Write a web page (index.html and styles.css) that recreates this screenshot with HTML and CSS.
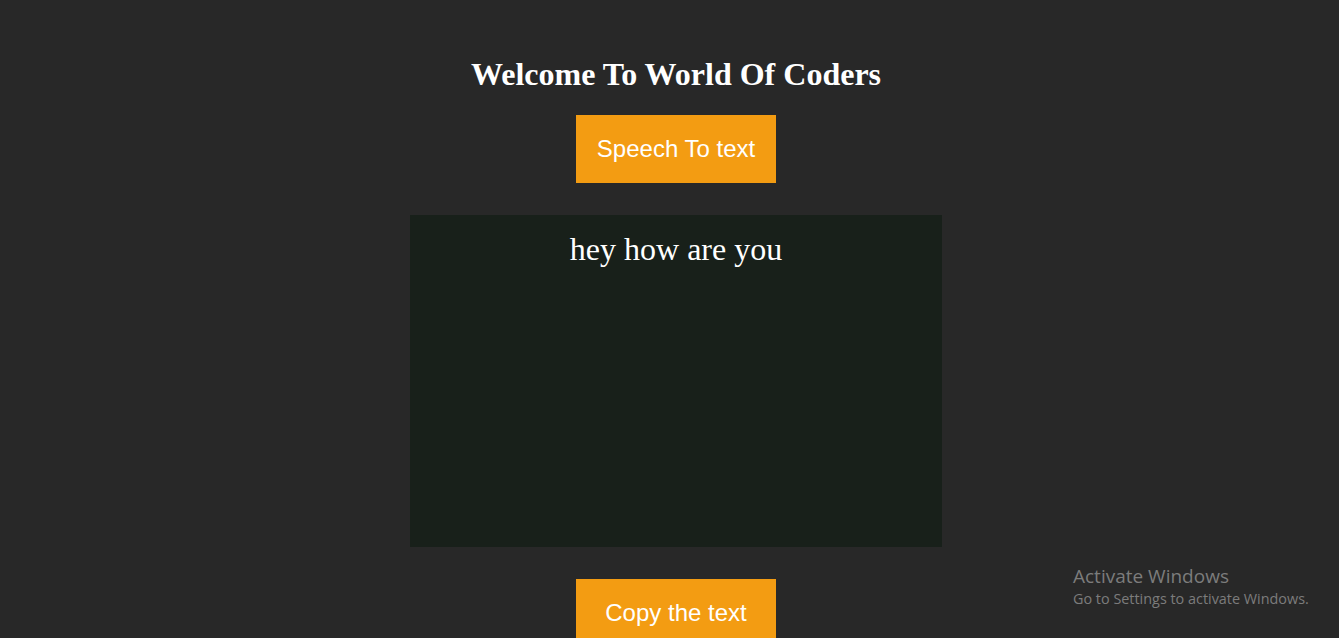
FILE: index.html
```html
<!DOCTYPE html>
<html>
<head>
<meta charset="utf-8">
<link rel="stylesheet" href="styles.css">
</head>
<body>
<main class="page">
  <h2 class="title">Welcome To World Of Coders</h2>
  <button class="btn btn-speech">Speech To text</button>
  <div class="output">hey how are you</div>
  <button class="btn btn-copy">Copy the text</button>
</main>
<div class="activate">
  <div class="activate-title">Activate Windows</div>
  <div class="activate-sub">Go to Settings to activate Windows.</div>
</div>
</body>
</html>
```
FILE: styles.css
```css
html, body {
  margin: 0;
  padding: 0;
  background: #282828;
  height: 100%;
  overflow: hidden;
}
.page {
  display: flex;
  flex-direction: column;
  align-items: center;
  padding-top: 55px;
  padding-left: 13px;
}
.title {
  margin: 0;
  font-family: "Liberation Serif", serif;
  font-weight: bold;
  font-size: 32px;
  line-height: 38px;
  color: #fff;
}
.btn {
  width: 200px;
  height: 68px;
  border: none;
  background: #f39c12;
  color: #fff;
  font-family: "Liberation Sans", Arial, sans-serif;
  font-size: 24px;
  padding: 0;
}
.btn-speech {
  margin-top: 22px;
}
.output {
  margin-top: 32px;
  width: 532px;
  height: 332px;
  background: #18201a;
  color: #fff;
  font-family: "Liberation Serif", serif;
  font-size: 32px;
  text-align: center;
  padding-top: 16px;
  box-sizing: border-box;
  line-height: 36px;
}
.btn-copy {
  margin-top: 32px;
}
.activate {
  position: absolute;
  left: 1073px;
  top: 564px;
  font-family: "Open Sans", sans-serif;
  color: #7c7c7c;
}
.activate-title {
  font-size: 19px;
  line-height: 25px;
}
.activate-sub {
  font-size: 14.4px;
  line-height: 20px;
}
```
